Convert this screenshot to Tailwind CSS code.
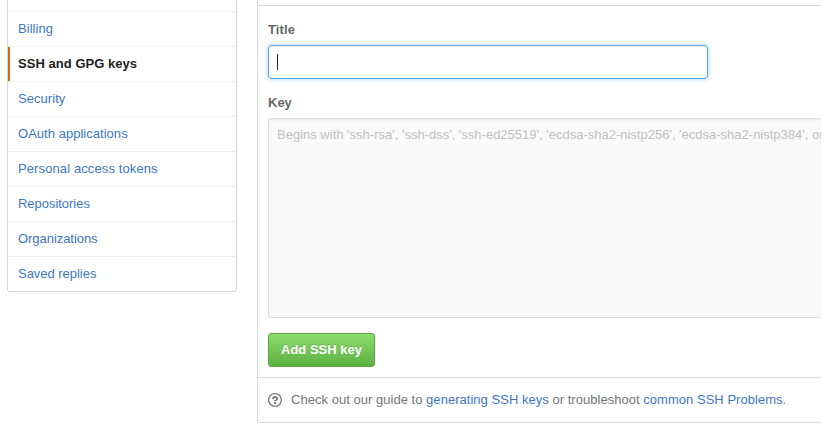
<!DOCTYPE html>
<html lang="en">
<head>
<meta charset="utf-8">
<title>SSH and GPG keys</title>
<script src="https://cdn.jsdelivr.net/npm/@tailwindcss/browser@4"></script>
</head>
<body class="h-[431px] w-[821px] overflow-hidden bg-white font-['Liberation_Sans',Arial,sans-serif] text-[13px] leading-[18px] text-[#666]">
<div class="flex w-[821px] items-start gap-5 pl-[7px]">
  <nav class="h-[292px] w-[230px] shrink-0 rounded-b-[3px] border border-t-0 border-[#d8d8d8] pt-[11px] text-[#4078c0]">
    <a class="block h-[35px] border-t border-[#eee] pt-2 pl-[10px] tracking-[0.05px]">Billing</a>
    <a class="relative block h-[35px] border-t border-[#eee] pt-2 pl-[10px] font-bold tracking-[0.04px] text-[#222]"><span class="absolute top-0 left-0 h-[34px] w-[2px] bg-[#d26911]"></span>SSH and GPG keys</a>
    <a class="block h-[35px] border-t border-[#eee] pt-2 pl-[10px] tracking-[0.05px]">Security</a>
    <a class="block h-[35px] border-t border-[#eee] pt-2 pl-[10px] tracking-[0.03px]">OAuth applications</a>
    <a class="block h-[35px] border-t border-[#eee] pt-2 pl-[10px] tracking-[0.11px]">Personal access tokens</a>
    <a class="block h-[35px] border-t border-[#eee] pt-2 pl-[10px] tracking-[-0.03px]">Repositories</a>
    <a class="block h-[35px] border-t border-[#eee] pt-2 pl-[10px] tracking-[-0.05px]">Organizations</a>
    <a class="block h-[35px] border-t border-[#eee] pt-2 pl-[10px] tracking-[-0.03px]">Saved replies</a>
  </nav>
  <main class="h-[423px] w-[564px] shrink-0 overflow-hidden rounded-bl-[3px] border-b border-l border-[#d8d8d8] pt-[5px]">
    <div class="h-[372px] border-t border-[#d8d8d8] pt-[15px] pl-[10px]">
      <label class="block h-[24px] font-bold tracking-[0.1px]">Title</label>
      <div class="flex h-[34px] w-[440px] items-center rounded-[3px] border border-[#51a7e8] pl-2 shadow-[inset_0_1px_2px_rgba(0,0,0,0.075),0_0_5px_rgba(81,167,232,0.5)]"><span class="h-4 w-px bg-[#222]"></span></div>
      <label class="mt-[15px] block h-[24px] font-bold">Key</label>
      <div class="h-[200px] overflow-hidden rounded-l-[3px] border border-r-0 border-[#ddd] bg-[#fafafa] pt-[7px] pl-2 whitespace-nowrap text-[#c0c0c0] shadow-[inset_0_1px_2px_rgba(0,0,0,0.075)]">Begins with 'ssh-rsa', 'ssh-dss', 'ssh-ed25519', 'ecdsa-sha2-nistp256', 'ecdsa-sha2-nistp384', or</div>
      <button class="mt-[15px] flex h-[34px] w-[107px] items-center justify-center rounded-[3px] border border-[#5ca941] bg-linear-to-b from-[#8add6d] to-[#60b044] font-bold text-white [text-shadow:0_-1px_0_rgba(0,0,0,0.15)]">Add SSH key</button>
    </div>
    <p class="flex items-center border-t border-[#d8d8d8] pt-[13px] pl-[10px] text-[#767676]">
      <svg class="mr-[9px] h-4 w-[14px] fill-[#767676]" viewBox="0 0 14 16"><path d="M6 10h2v2H6v-2zm4-3.5C10 8.64 8 9 8 9H6c0-.55.45-1 1-1h.5c.28 0 .5-.22.5-.5v-1c0-.28-.22-.5-.5-.5h-1c-.28 0-.5.22-.5.5V7H4c0-1.500 1.500-3 3-3s3 1 3 2.500zM7 2.300c3.140 0 5.700 2.560 5.700 5.700s-2.560 5.700-5.700 5.700A5.710 5.710 0 0 1 1.300 8c0-3.140 2.560-5.700 5.700-5.700zM7 1C3.140 1 0 4.140 0 8s3.140 7 7 7 7-3.140 7-7-3.140-7-7-7z"/></svg>
      <span class="tracking-[0.03px]">Check out our guide to <a class="text-[#4078c0]">generating SSH keys</a> or troubleshoot <a class="text-[#4078c0]">common SSH Problems</a>.</span>
    </p>
  </main>
</div>
</body>
</html>
